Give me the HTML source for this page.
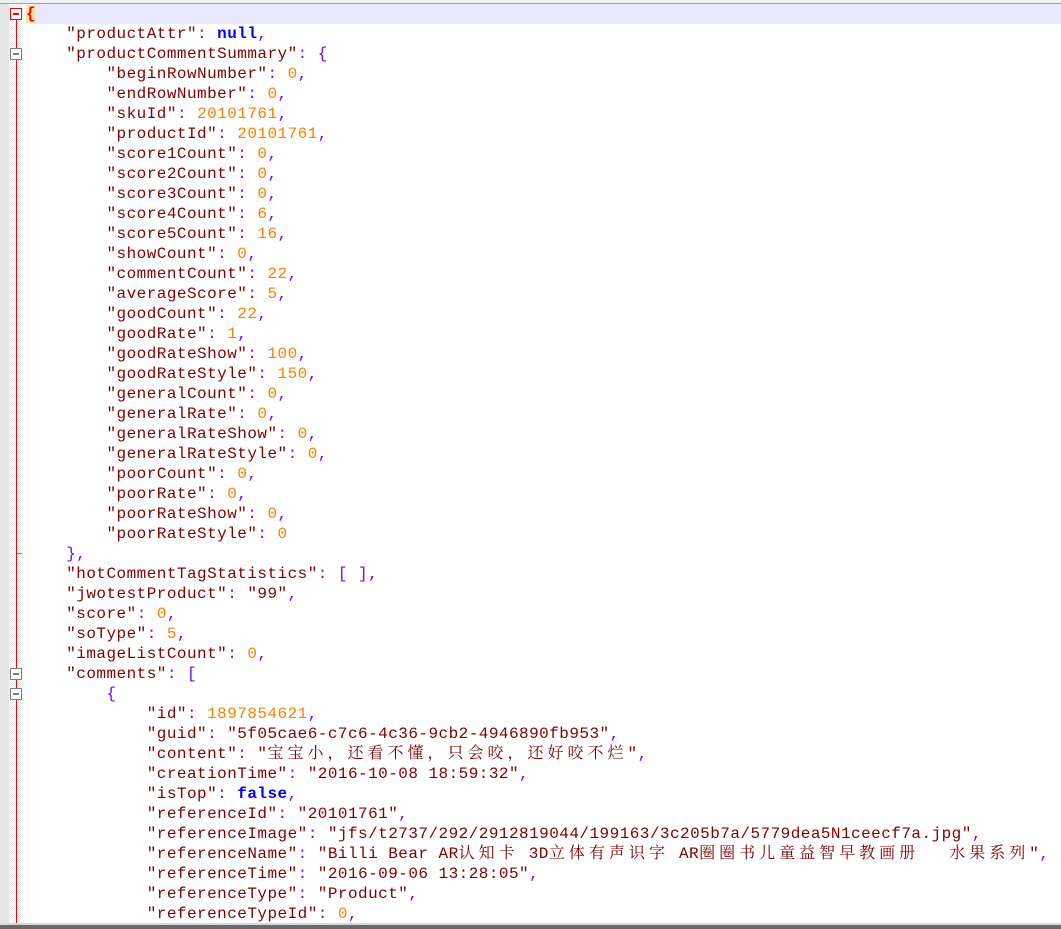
<!DOCTYPE html>
<html><head><meta charset="utf-8"><style>
html,body{margin:0;padding:0;width:1061px;height:929px;overflow:hidden;background:#fff;}
#top{position:absolute;left:0;top:0;width:1061px;height:3px;background:#f0f0f0;border-bottom:1px solid #a0a0a0;}
#m1{position:absolute;left:0;top:4px;width:9px;height:919px;background:#e4e4e4;}
#m2{position:absolute;left:9px;top:4px;width:14px;height:919px;background-color:#fff;background-image:linear-gradient(45deg,#e8e8e8 25%,transparent 25%,transparent 75%,#e8e8e8 75%),linear-gradient(45deg,#e8e8e8 25%,transparent 25%,transparent 75%,#e8e8e8 75%);background-size:2px 2px;background-position:0 0,1px 1px;}
#red{position:absolute;left:16px;top:19px;width:1px;height:904px;background:#f00;}
.box{position:absolute;left:10px;width:10px;height:10px;border:1px solid #808080;background:#fff;}
.box:after{content:"";position:absolute;left:2px;top:4px;width:6px;height:2px;background:#808080;}
.box.r{border-color:#f00}.box.r:after{background:#f00}
#hl{position:absolute;left:34px;top:4px;width:1027px;height:20px;background:#e8e8ff;}
#bot{position:absolute;left:0;top:923px;width:1061px;height:2px;background:#d8d8d8;}
#bot2{position:absolute;left:0;top:925px;width:1061px;height:4px;background:#6a6a6a;}
.l{position:absolute;left:26px;height:20px;line-height:20px;white-space:pre;font-family:"Liberation Mono",monospace;font-size:16px;letter-spacing:0.46px;color:#800000;}
.p{color:#8000ff}.n{color:#ff8000}.b{color:#0000ff;font-weight:bold}
.c{font-family:"Noto Serif CJK SC","Noto Sans CJK SC",serif;font-size:16px;letter-spacing:4px;line-height:0;}
.br{color:#f00;font-weight:bold;background:#ffe0a0}
</style></head><body>
<div id="top"></div><div id="m1"></div><div id="m2"></div><div id="hl"></div><div id="red"></div>
<div class="box r" style="top:8px"></div>
<div class="box" style="top:48px"></div>
<div style="position:absolute;left:17px;top:553px;width:5px;height:1px;background:#808080"></div>
<div class="box" style="top:668px"></div>
<div class="box" style="top:688px"></div>
<div class="l" style="top:4px"><span class="br">{</span></div>
<div class="l" style="top:24px">    "productAttr"<span class="p">: </span><span class="b">null</span><span class="p">,</span></div>
<div class="l" style="top:44px">    "productCommentSummary"<span class="p">: {</span></div>
<div class="l" style="top:64px">        "beginRowNumber"<span class="p">: </span><span class="n">0</span><span class="p">,</span></div>
<div class="l" style="top:84px">        "endRowNumber"<span class="p">: </span><span class="n">0</span><span class="p">,</span></div>
<div class="l" style="top:104px">        "skuId"<span class="p">: </span><span class="n">20101761</span><span class="p">,</span></div>
<div class="l" style="top:124px">        "productId"<span class="p">: </span><span class="n">20101761</span><span class="p">,</span></div>
<div class="l" style="top:144px">        "score1Count"<span class="p">: </span><span class="n">0</span><span class="p">,</span></div>
<div class="l" style="top:164px">        "score2Count"<span class="p">: </span><span class="n">0</span><span class="p">,</span></div>
<div class="l" style="top:184px">        "score3Count"<span class="p">: </span><span class="n">0</span><span class="p">,</span></div>
<div class="l" style="top:204px">        "score4Count"<span class="p">: </span><span class="n">6</span><span class="p">,</span></div>
<div class="l" style="top:224px">        "score5Count"<span class="p">: </span><span class="n">16</span><span class="p">,</span></div>
<div class="l" style="top:244px">        "showCount"<span class="p">: </span><span class="n">0</span><span class="p">,</span></div>
<div class="l" style="top:264px">        "commentCount"<span class="p">: </span><span class="n">22</span><span class="p">,</span></div>
<div class="l" style="top:284px">        "averageScore"<span class="p">: </span><span class="n">5</span><span class="p">,</span></div>
<div class="l" style="top:304px">        "goodCount"<span class="p">: </span><span class="n">22</span><span class="p">,</span></div>
<div class="l" style="top:324px">        "goodRate"<span class="p">: </span><span class="n">1</span><span class="p">,</span></div>
<div class="l" style="top:344px">        "goodRateShow"<span class="p">: </span><span class="n">100</span><span class="p">,</span></div>
<div class="l" style="top:364px">        "goodRateStyle"<span class="p">: </span><span class="n">150</span><span class="p">,</span></div>
<div class="l" style="top:384px">        "generalCount"<span class="p">: </span><span class="n">0</span><span class="p">,</span></div>
<div class="l" style="top:404px">        "generalRate"<span class="p">: </span><span class="n">0</span><span class="p">,</span></div>
<div class="l" style="top:424px">        "generalRateShow"<span class="p">: </span><span class="n">0</span><span class="p">,</span></div>
<div class="l" style="top:444px">        "generalRateStyle"<span class="p">: </span><span class="n">0</span><span class="p">,</span></div>
<div class="l" style="top:464px">        "poorCount"<span class="p">: </span><span class="n">0</span><span class="p">,</span></div>
<div class="l" style="top:484px">        "poorRate"<span class="p">: </span><span class="n">0</span><span class="p">,</span></div>
<div class="l" style="top:504px">        "poorRateShow"<span class="p">: </span><span class="n">0</span><span class="p">,</span></div>
<div class="l" style="top:524px">        "poorRateStyle"<span class="p">: </span><span class="n">0</span></div>
<div class="l" style="top:544px">    <span class="p">},</span></div>
<div class="l" style="top:564px">    "hotCommentTagStatistics"<span class="p">: [ ],</span></div>
<div class="l" style="top:584px">    "jwotestProduct"<span class="p">: </span>"99"<span class="p">,</span></div>
<div class="l" style="top:604px">    "score"<span class="p">: </span><span class="n">0</span><span class="p">,</span></div>
<div class="l" style="top:624px">    "soType"<span class="p">: </span><span class="n">5</span><span class="p">,</span></div>
<div class="l" style="top:644px">    "imageListCount"<span class="p">: </span><span class="n">0</span><span class="p">,</span></div>
<div class="l" style="top:664px">    "comments"<span class="p">: [</span></div>
<div class="l" style="top:684px">        <span class="p">{</span></div>
<div class="l" style="top:704px">            "id"<span class="p">: </span><span class="n">1897854621</span><span class="p">,</span></div>
<div class="l" style="top:724px">            "guid"<span class="p">: </span>"5f05cae6-c7c6-4c36-9cb2-4946890fb953"<span class="p">,</span></div>
<div class="l" style="top:744px">            "content"<span class="p">: </span>"<span class="c">宝宝小，还看不懂，只会咬，还好咬不烂</span>"<span class="p">,</span></div>
<div class="l" style="top:764px">            "creationTime"<span class="p">: </span>"2016-10-08 18:59:32"<span class="p">,</span></div>
<div class="l" style="top:784px">            "isTop"<span class="p">: </span><span class="b">false</span><span class="p">,</span></div>
<div class="l" style="top:804px">            "referenceId"<span class="p">: </span>"20101761"<span class="p">,</span></div>
<div class="l" style="top:824px">            "referenceImage"<span class="p">: </span>"jfs/t2737/292/2912819044/199163/3c205b7a/5779dea5N1ceecf7a.jpg"<span class="p">,</span></div>
<div class="l" style="top:844px">            "referenceName"<span class="p">: </span>"Billi Bear AR<span class="c">认知卡</span> 3D<span class="c">立体有声识字</span> AR<span class="c">圈圈书儿童益智早教画册</span>   <span class="c">水果系列</span>"<span class="p">,</span></div>
<div class="l" style="top:864px">            "referenceTime"<span class="p">: </span>"2016-09-06 13:28:05"<span class="p">,</span></div>
<div class="l" style="top:884px">            "referenceType"<span class="p">: </span>"Product"<span class="p">,</span></div>
<div class="l" style="top:904px">            "referenceTypeId"<span class="p">: </span><span class="n">0</span><span class="p">,</span></div>
<div id="bot"></div><div id="bot2"></div>
</body></html>
